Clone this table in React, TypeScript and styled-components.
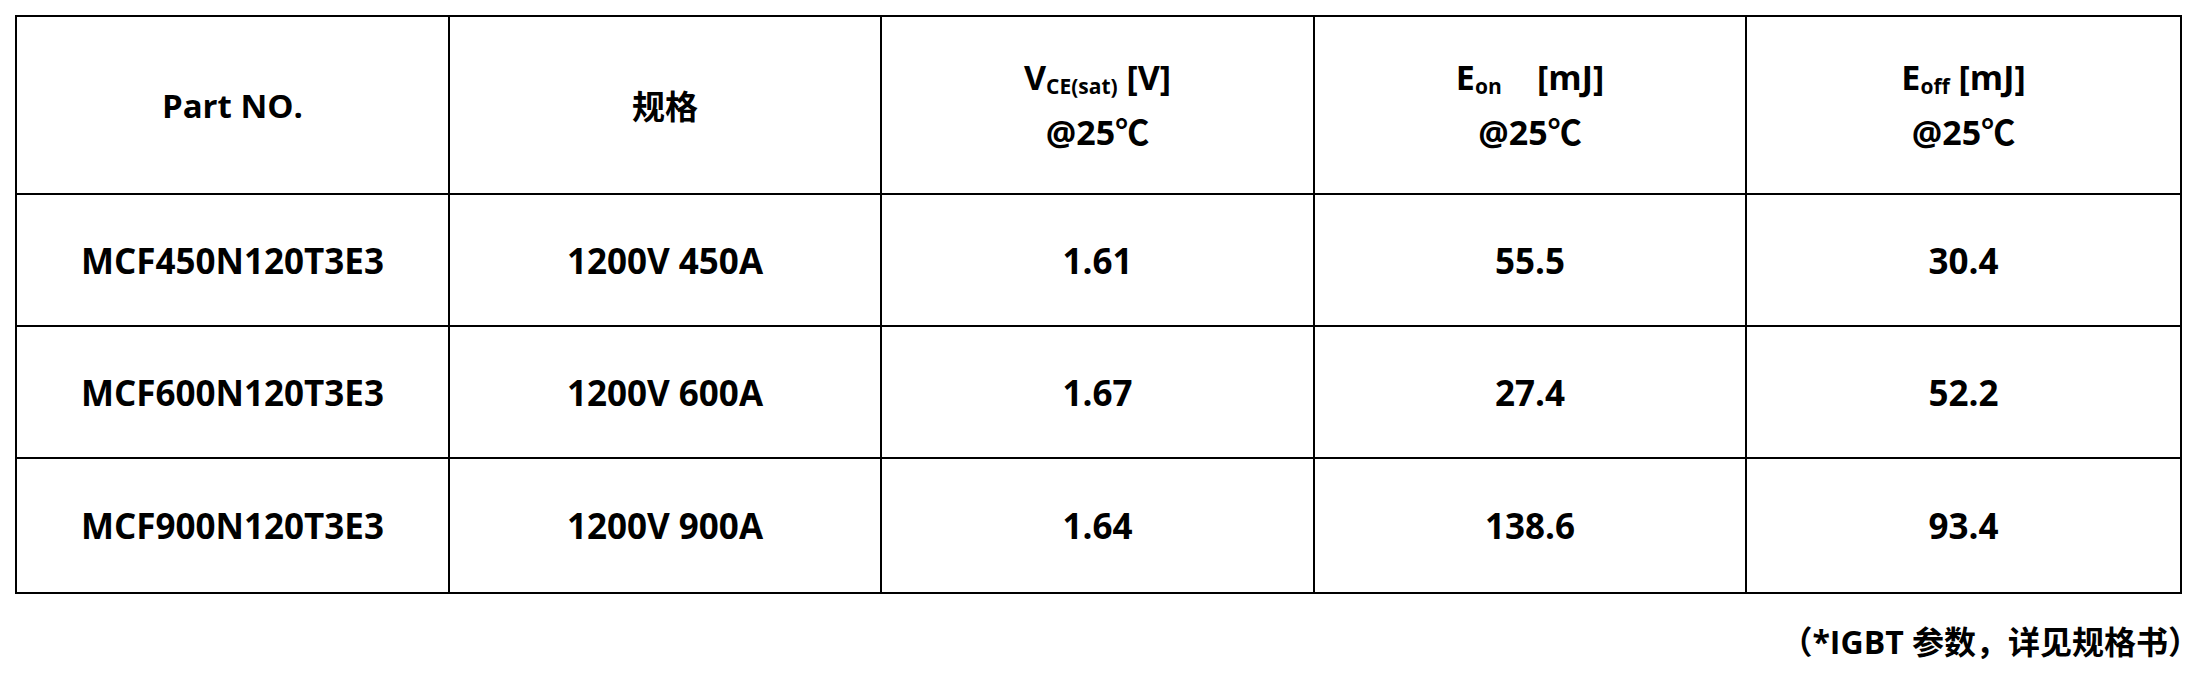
import styled, { createGlobalStyle } from 'styled-components';

const GlobalStyle = createGlobalStyle`
  html, body {
    margin: 0;
    padding: 0;
    background: #ffffff;
  }
  body {
    font-family: "Open Sans", "Noto Sans CJK SC", sans-serif;
    color: #000000;
  }
`;

interface Row {
  part: string;
  spec: string;
  vce: string;
  eon: string;
  eoff: string;
}

const ROWS: Row[] = [
  { part: 'MCF450N120T3E3', spec: '1200V 450A', vce: '1.61', eon: '55.5', eoff: '30.4' },
  { part: 'MCF600N120T3E3', spec: '1200V 600A', vce: '1.67', eon: '27.4', eoff: '52.2' },
  { part: 'MCF900N120T3E3', spec: '1200V 900A', vce: '1.64', eon: '138.6', eoff: '93.4' },
];

function App() {
  return (
    <Page>
      <GlobalStyle />
      <Table>
        <colgroup>
          <col style={{ width: 433 }} />
          <col style={{ width: 432 }} />
          <col style={{ width: 433 }} />
          <col style={{ width: 432 }} />
          <col style={{ width: 435 }} />
        </colgroup>
        <thead>
          <HeadRow>
            <HeadCell>Part NO.</HeadCell>
            <HeadCell>规格</HeadCell>
            <HeadCell>
              <Line>
                V<Sub>CE(sat)</Sub> [V]
              </Line>
              <Line>@25℃</Line>
            </HeadCell>
            <HeadCell>
              <Line>
                E<Sub>on</Sub>&nbsp;&nbsp;&nbsp;&nbsp;[mJ]
              </Line>
              <Line>@25℃</Line>
            </HeadCell>
            <HeadCell>
              <Line>
                E<Sub>off</Sub> [mJ]
              </Line>
              <Line>@25℃</Line>
            </HeadCell>
          </HeadRow>
        </thead>
        <tbody>
          {ROWS.map((r, i) => (
            <BodyRow key={r.part} last={i === ROWS.length - 1}>
              <Cell>{r.part}</Cell>
              <Cell>{r.spec}</Cell>
              <Cell>{r.vce}</Cell>
              <Cell>{r.eon}</Cell>
              <Cell>{r.eoff}</Cell>
            </BodyRow>
          ))}
        </tbody>
      </Table>
      <Note>
        （*IGBT 参数，详见规格书<CloseParen>）</CloseParen>
      </Note>
    </Page>
  );
}

const Page = styled.div`
  width: 2195px;
  height: 673px;
  padding: 15px 0 0 15px;
  box-sizing: border-box;
  display: flex;
  flex-direction: column;
`;

const Table = styled.table`
  width: 2165px;
  border-collapse: collapse;
  table-layout: fixed;
  border: 2px solid #000;
`;

const HeadRow = styled.tr`
  height: 178px;
`;

const BodyRow = styled.tr<{ last?: boolean }>`
  height: ${({ last }) => (last ? 135 : 132)}px;
`;

const HeadCell = styled.th`
  border: 2px solid #000;
  padding: 0;
  text-align: center;
  vertical-align: middle;
  font-size: 33px;
  font-weight: 700;
`;

const Line = styled.div`
  font-size: 34px;
  line-height: 55px;
`;

const Sub = styled.span`
  font-size: 21px;
  line-height: 0;
  vertical-align: -4px;
`;

const Cell = styled.td`
  border: 2px solid #000;
  padding: 0;
  text-align: center;
  vertical-align: middle;
  font-size: 35px;
  font-weight: 700;
`;

const Note = styled.div`
  align-self: flex-end;
  margin-top: 28px;
  margin-right: 3px;
  font-size: 32px;
  font-weight: 700;
  line-height: 40px;
  white-space: nowrap;
`;

const CloseParen = styled.span`
  letter-spacing: -8px;
`;

export default App;
